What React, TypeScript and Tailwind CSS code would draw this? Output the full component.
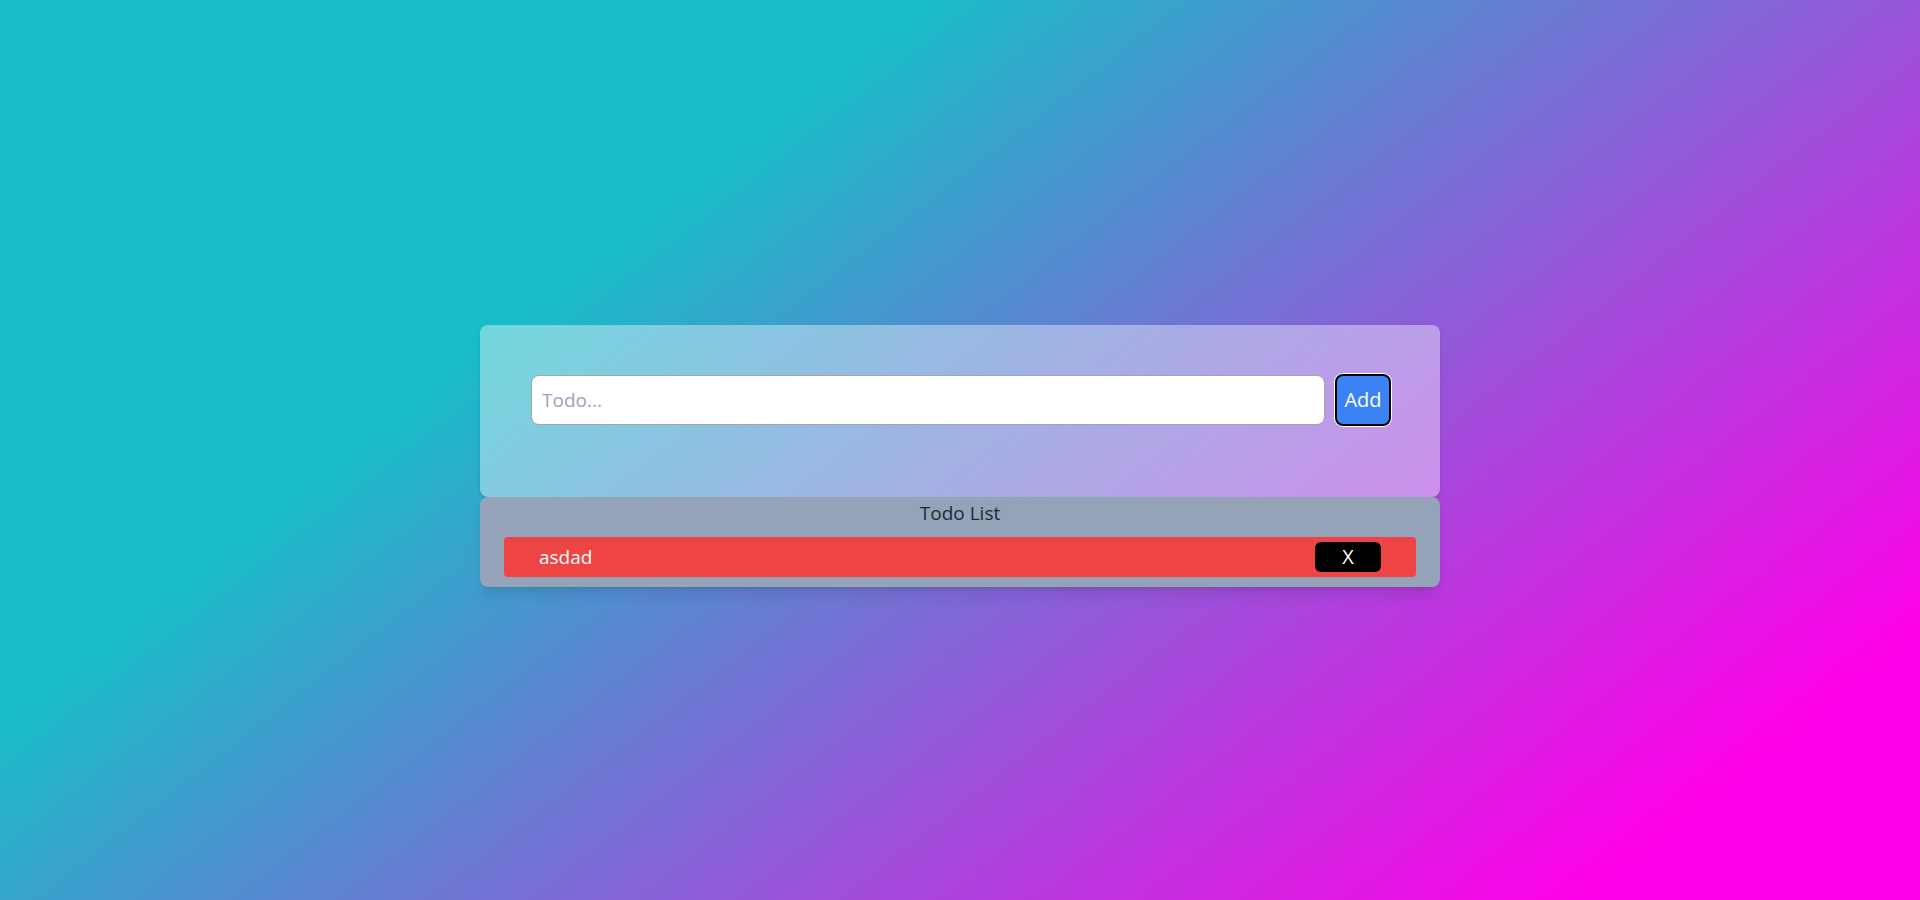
import React from "react";

export default function App() {
  return (
    <div
      className="min-h-screen w-full bg-[linear-gradient(142deg,#18bdc8_30%,#ff00e8_89%)] pt-[325px]"
      style={{ fontFamily: '"Segoe UI", "Open Sans", "Noto Sans", sans-serif' }}
    >
      <div className="mx-auto w-[960px]">
        <div className="rounded-lg bg-white/40 pl-[51px] pr-[49px] pt-[49px] pb-[71px] shadow-md">
          <div className="flex items-center gap-[10px]">
            <input
              type="text"
              placeholder="Todo..."
              className="h-[50px] flex-1 rounded-lg border border-[#a3a3ad] bg-white pl-[10px] text-[19px] text-gray-800 outline-none placeholder:text-[#9aa3b8]"
            />
            <button className="h-[52px] w-[56px] rounded-lg border-2 border-black bg-[#3b82f6] text-[20px] text-white ring-1 ring-white">
              Add
            </button>
          </div>
        </div>
        <div className="rounded-lg bg-[#94a3b8] px-[24px] pb-[10px] pt-[2px] shadow-lg">
          <div className="text-center text-[19px] leading-[28px] text-[#1f2937]">Todo List</div>
          <div className="mt-[10px] flex h-[40px] items-center justify-between rounded bg-[#ef4444] px-[35px]">
            <span className="text-[19px] text-white">asdad</span>
            <button className="flex h-[30px] w-[66px] items-center justify-center rounded-md bg-black text-[20px] text-white">
              X
            </button>
          </div>
        </div>
      </div>
    </div>
  );
}
